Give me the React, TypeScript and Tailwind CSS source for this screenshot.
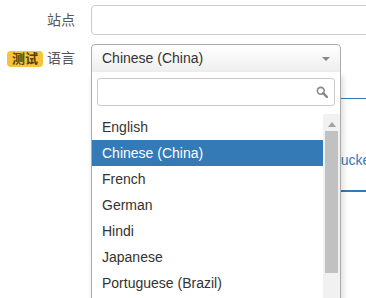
import React from "react";

const options = [
  "English",
  "Chinese (China)",
  "French",
  "German",
  "Hindi",
  "Japanese",
  "Portuguese (Brazil)",
];

const SearchIcon = () => (
  <svg width="12" height="12" viewBox="0 0 12 12" className="text-[#888]">
    <circle cx="4.8" cy="4.8" r="3.4" fill="none" stroke="currentColor" strokeWidth="1.6" />
    <path d="M7.2 7.2 L10.8 10.8" stroke="currentColor" strokeWidth="2.4" strokeLinecap="round" />
  </svg>
);

const App = () => {
  const selected = "Chinese (China)";

  return (
    <div className="relative w-[366px] h-[298px] overflow-hidden bg-white text-[14px] text-[#333] font-['Liberation_Sans','Noto_Sans_CJK_SC',sans-serif]">
      <div className="flex items-center pt-[5px]">
        <label className="w-[91px] shrink-0 pr-[16px] text-right text-[#555]">站点</label>
        <div className="w-[300px] h-[30px] shrink-0 border border-[#ccc] rounded-[4px]" />
      </div>

      <div className="flex items-center mt-[9px]">
        <div className="w-[91px] shrink-0 pr-[16px] flex justify-end items-center gap-[4px]">
          <span className="bg-[#f7c23c] text-[#5a3d00] font-bold text-[13px] leading-[16px] px-[5px] rounded-[4px]">
            测试
          </span>
          <span className="text-[#555]">语言</span>
        </div>
        <div className="w-[250px] h-[29px] shrink-0 flex items-center justify-between border border-[#aaa] rounded-t-[4px] bg-gradient-to-b from-white to-[#eee] pl-[10px] pr-[10px]">
          <span>{selected}</span>
          <svg width="8" height="4" viewBox="0 0 8 4">
            <path d="M0 0 L8 0 L4 4 Z" fill="#888" />
          </svg>
        </div>
      </div>

      {/* content behind the open dropdown */}
      <div className="ml-[91px] w-[275px]">
        <div className="h-[26px] border-b border-[#337ab7]" />
        <div className="h-[51px]" />
        <div className="pl-[242px] text-[#337ab7] leading-[20px] whitespace-nowrap">bucket</div>
        <div className="h-[20px]" />
        <div className="border-b-[2px] border-[#337ab7]" />
      </div>

      {/* select2 dropdown */}
      <div className="absolute left-[91px] top-[72px] w-[250px] h-[240px] bg-white border border-t-0 border-[#aaa] shadow-[2px_4px_6px_rgba(0,0,0,0.15)]">
        <div className="px-[5px] pt-[6px] pb-[8px]">
          <div className="h-[28px] border border-[#ccc] rounded-[3px] flex items-center justify-end pr-[6px]">
            <SearchIcon />
          </div>
        </div>
        <div className="flex">
          <ul className="flex-1">
            {options.map((o) => (
              <li
                key={o}
                className={
                  o === selected
                    ? "h-[26px] pl-[10px] flex items-center bg-[#337ab7] text-white"
                    : "h-[26px] pl-[10px] flex items-center"
                }
              >
                {o}
              </li>
            ))}
          </ul>
          <div className="w-[17px] h-[200px] bg-[#f1f1f1] flex flex-col items-center">
            <svg width="8" height="5" viewBox="0 0 8 5" className="mt-[8px]">
              <path d="M0 5 L8 5 L4 0 Z" fill="#a3a3a3" />
            </svg>
            <div className="mt-[4px] w-[13px] h-[142px] bg-[#c1c1c1]" />
          </div>
        </div>
      </div>
    </div>
  );
};

export default App;
